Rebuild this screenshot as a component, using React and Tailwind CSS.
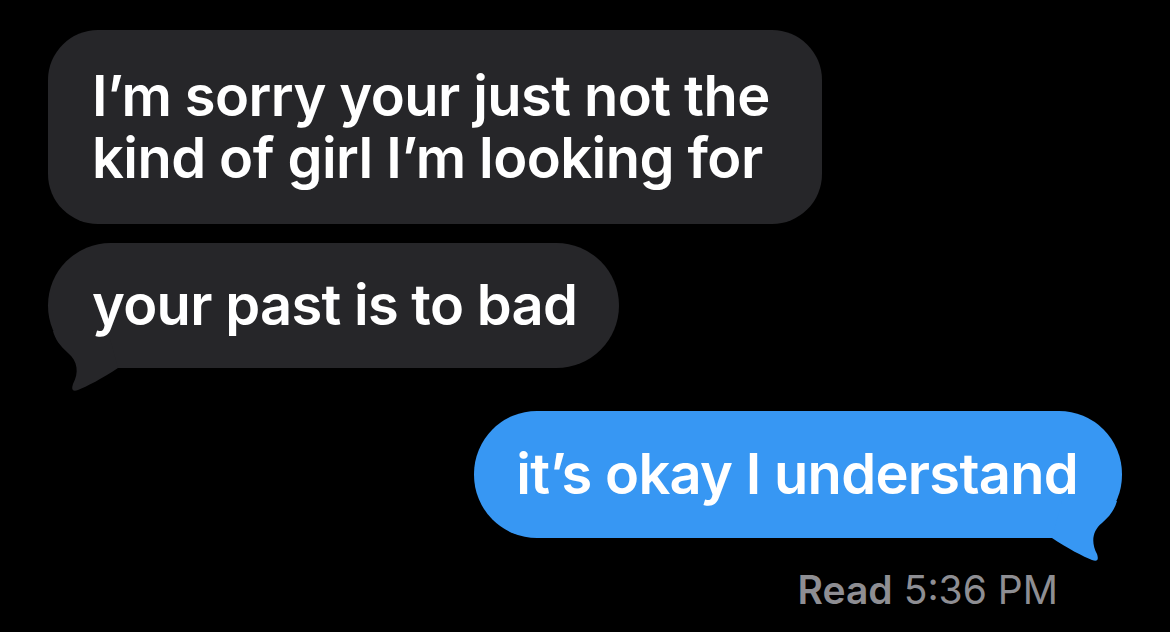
import React from 'react';

const FONT = { fontFamily: 'Inter, "Noto Sans", sans-serif' };

// iMessage-style tail, drawn in a 80x70 box hanging off the bubble's bottom corner
const Tail = ({ side, color }) => {
  const right =
    'M10 40 C25 50 42 59 50 62 Q58 65 55 56 C49 45 50 33 60 25 C68 18 73 11 75 3 L20 3 Z';
  const left =
    'M70 40 C55 50 38 59 30 62 Q22 65 25 56 C31 45 30 33 20 25 C12 18 7 11 5 3 L60 3 Z';
  return (
    <svg
      width="80"
      height="70"
      viewBox="0 0 80 70"
      className={`absolute bottom-[-30px] ${side === 'right' ? 'right-0' : 'left-0'}`}
    >
      <path d={side === 'right' ? right : left} fill={color} />
    </svg>
  );
};

export default function App() {
  return (
    <div
      className="w-full h-[632px] bg-black overflow-hidden flex flex-col pt-[30px] px-[48px] antialiased"
      style={FONT}
    >
      {/* incoming */}
      <div className="self-start bg-[#262629] rounded-[50px] pl-[44px] pr-[52px] py-[35px] text-white text-[56px] leading-[62px] font-semibold tracking-[-0.55px]">
        I’m sorry your just not the
        <br />
        kind of girl I’m looking for
      </div>

      <div className="relative self-start mt-[19px] bg-[#262629] rounded-[63px] pl-[44px] pr-[42px] py-[32px] text-white text-[56px] leading-[61px] font-semibold tracking-[-0.7px]">
        <Tail side="left" color="#262629" />
        <span className="relative">your past is to bad</span>
      </div>

      {/* outgoing */}
      <div className="relative self-end mt-[43px] bg-[#3797f3] rounded-[63px] pl-[42px] pr-[44px] py-[33px] text-white text-[56px] leading-[61px] font-semibold tracking-[-0.7px]">
        <Tail side="right" color="#3797f3" />
        <span className="relative">it’s okay I understand</span>
      </div>

      <div className="self-end mt-[30px] pr-[64px] text-[39px] leading-[44px] text-[#8e8e93]">
        <span className="font-semibold">Read</span> 5:36 PM
      </div>
    </div>
  );
}
